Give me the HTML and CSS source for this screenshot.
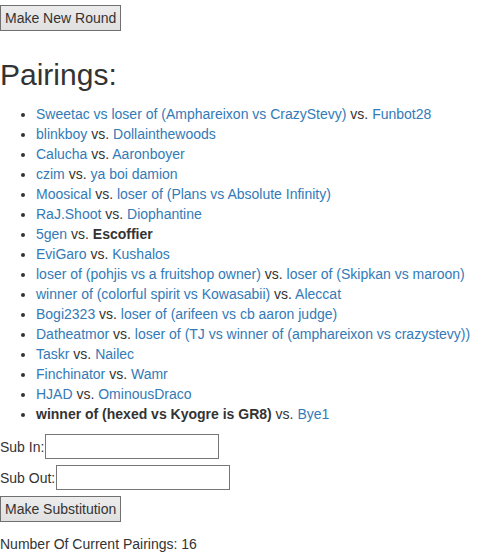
FILE: index.html
```html
<!DOCTYPE html>
<html>
<head>
<meta charset="utf-8">
<link rel="stylesheet" href="styles.css">
</head>
<body>
<div class="top"><button class="btn">Make New Round</button></div>
<h1 class="title">Pairings:</h1>
<ul class="pairs">
<li><a>Sweetac vs loser of (Amphareixon vs CrazyStevy)</a> vs. <a>Funbot28</a></li>
<li><a>blinkboy</a> vs. <a>Dollainthewoods</a></li>
<li><a>Calucha</a> vs. <a>Aaronboyer</a></li>
<li><a>czim</a> vs. <a>ya boi damion</a></li>
<li><a>Moosical</a> vs. <a>loser of (Plans vs Absolute Infinity)</a></li>
<li><a>RaJ.Shoot</a> vs. <a>Diophantine</a></li>
<li><a>5gen</a> vs. <b>Escoffier</b></li>
<li><a>EviGaro</a> vs. <a>Kushalos</a></li>
<li><a>loser of (pohjis vs a fruitshop owner)</a> vs. <a>loser of (Skipkan vs maroon)</a></li>
<li><a>winner of (colorful spirit vs Kowasabii)</a> vs. <a>Aleccat</a></li>
<li><a>Bogi2323</a> vs. <a>loser of (arifeen vs cb aaron judge)</a></li>
<li><a>Datheatmor</a> vs. <a>loser of (TJ vs winner of (amphareixon vs crazystevy))</a></li>
<li><a>Taskr</a> vs. <a>Nailec</a></li>
<li><a>Finchinator</a> vs. <a>Wamr</a></li>
<li><a>HJAD</a> vs. <a>OminousDraco</a></li>
<li><b>winner of (hexed vs Kyogre is GR8)</b> vs. <a>Bye1</a></li>
</ul>
<div class="field"><label>Sub In:</label><input class="inp" type="text"></div>
<div class="field"><label>Sub Out:</label><input class="inp" type="text"></div>
<div class="field"><button class="btn">Make Substitution</button></div>
<p class="count">Number Of Current Pairings: 16</p>
</body>
</html>
```
FILE: styles.css
```css
html, body {
  margin: 0;
  padding: 0;
  background: #fff;
}
body {
  font-family: "Liberation Sans", Arial, sans-serif;
  font-size: 14px;
  line-height: 20px;
  color: #333;
}
.top {
  padding-top: 5px;
}
.btn {
  font-family: "Liberation Sans", Arial, sans-serif;
  font-size: 14px;
  line-height: 17px;
  color: #333;
  background: linear-gradient(#ececec, #e0e0e0);
  border: 1px solid #707070;
  border-radius: 0;
  padding: 4px 4px 4px 4px;
  margin: 0;
  height: 26px;
  display: block;
}
.title {
  font-family: "Liberation Sans", Arial, sans-serif;
  font-weight: 500;
  font-size: 30px;
  line-height: 33px;
  margin: 27px 0 13px 0;
  color: #333;
}
.pairs {
  margin: 0 0 10px 0;
  padding-left: 36px;
}
.pairs a {
  color: #337ab7;
  text-decoration: none;
}
.pairs b {
  font-weight: bold;
}
.field {
  display: flex;
  align-items: center;
  margin-bottom: 6px;
}
.field label {
  margin-right: 1px;
}
.inp {
  width: 170px;
  height: 23px;
  box-sizing: content-box;
  padding: 0 1px;
  border: 1px solid #767676;
  margin: 0;
  font-family: "Liberation Sans", Arial, sans-serif;
  font-size: 14px;
}
.count {
  margin: 12px 0 0 0;
}
```
